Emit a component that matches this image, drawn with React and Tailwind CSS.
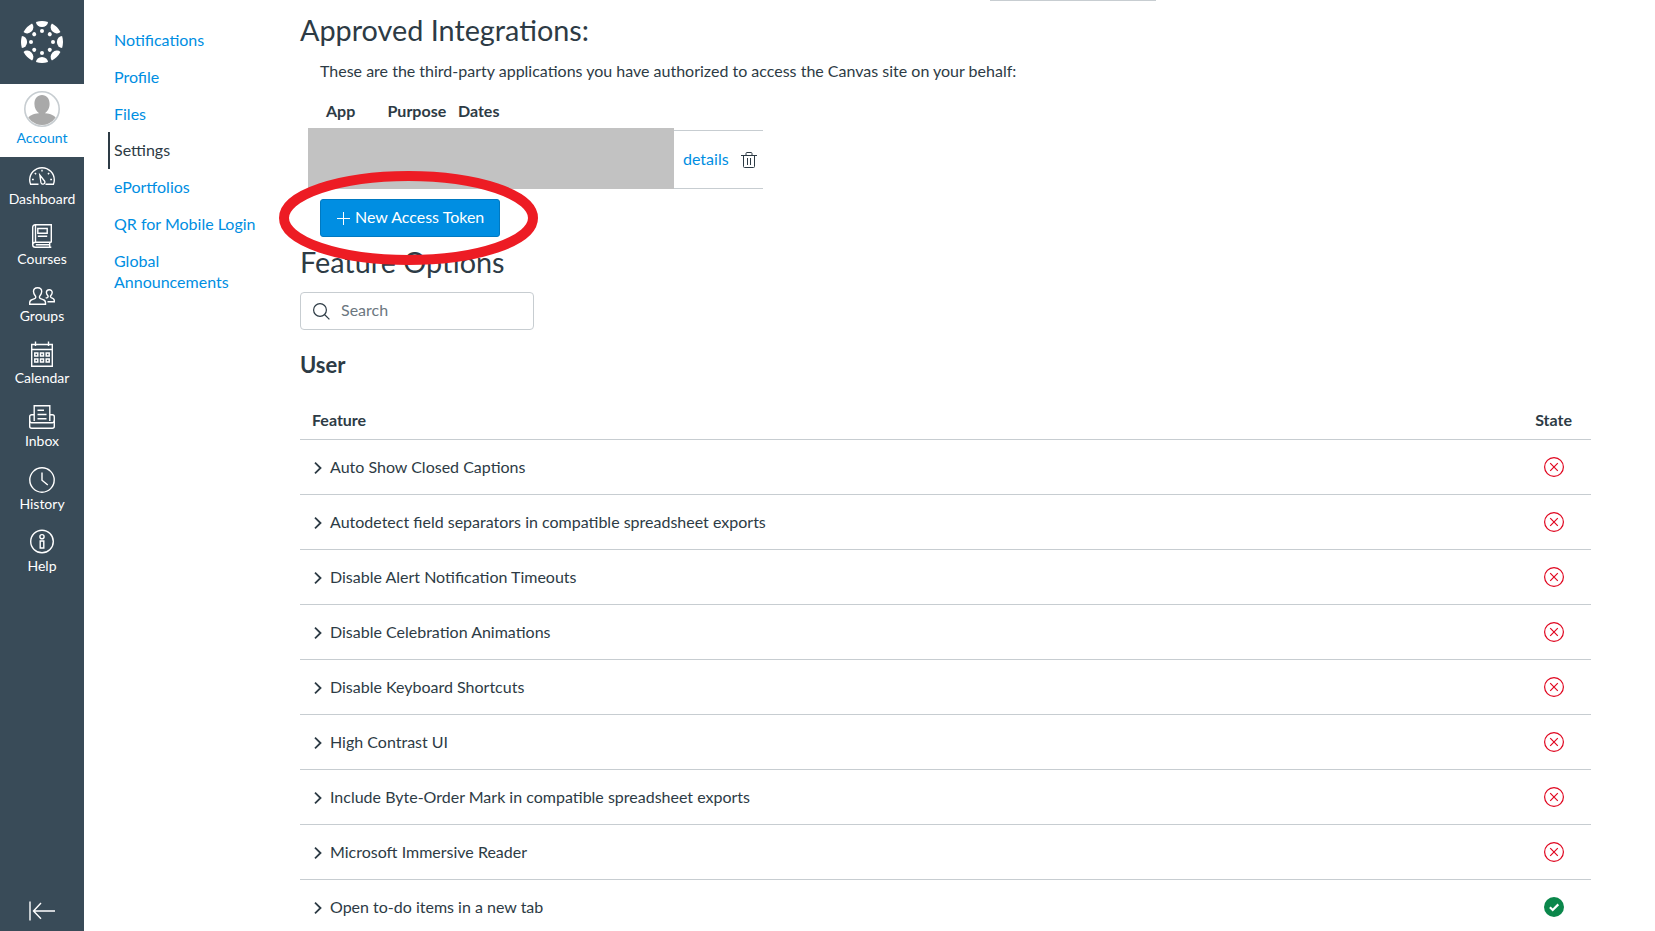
import React from "react";

const line = { fill: "none", stroke: "currentColor", strokeWidth: 1.4 };

function Logo() {
  const angles = [0, 45, 90, 135, 180, 225, 270, 315];
  return (
    <svg width="42" height="42" viewBox="-21 -21 42 42" fill="#fff">
      {angles.map((a) => (
        <g key={a} transform={`rotate(${a})`}>
          <path d="M-6 -20.1 A21 21 0 0 1 6 -20.1 A6 5.2 0 0 1 -6 -20.1Z" />
          <circle cx="0" cy="-11" r="2" />
        </g>
      ))}
    </svg>
  );
}

function Avatar() {
  return (
    <svg width="36" height="36" viewBox="0 0 36 36">
      <defs>
        <clipPath id="avatar-clip">
          <circle cx="18" cy="18" r="16" />
        </clipPath>
      </defs>
      <circle cx="18" cy="18" r="17.2" fill="#fff" stroke="#c7cdd1" strokeWidth="1.6" />
      <g clipPath="url(#avatar-clip)" fill="#a9a9a9">
        <path d="M18 4C22.600 4 25.600 7.600 25.600 13C25.600 17 23.500 20.500 21.200 22V23.500H14.800V22C12.500 20.500 10.400 17 10.400 13C10.400 7.600 13.400 4 18 4Z" />
        <path d="M3 34V28C5 24.500 10 22.500 14.500 22.200Q18 24 21.500 22.200C26 22.500 31 24.500 33 28V34Z" />
      </g>
    </svg>
  );
}

const DashboardIcon = () => (
  <svg width="26" height="18" viewBox="0 0 26 18" {...line}>
    <path d="M9.500 17.300H1.600C.9 15.800.7 14.400.7 13A12.300 12.300 0 0 1 25.300 13C25.300 14.400 25.100 15.800 24.400 17.300H16.500" />
    <path d="M10.800 8L15.500 14A2 2 0 1 1 11.900 15.500Z" strokeWidth="1.300" />
    <path d="M13 2.800V4.600M5.800 6L7.100 7.300M20.200 6L18.900 7.300M3 12.500H4.800M21.200 12.500H23" />
  </svg>
);

const CoursesIcon = () => (
  <svg width="20" height="24" viewBox="0 0 20 24" {...line}>
    <path d="M19.300 18.500V.7H3.300C1.700.7.7 1.700.7 3.200V20.800C.7 22.300 1.700 23.300 3.300 23.300H19.300M19.300 18.300H3.300C1.700 18.300.8 19.300.8 20.600M3.500 .8V18M3.800 20.800H18M17.700 18.500V23" />
    <path d="M5.800 4.500H15.200V9.300H5.800ZM5.800 12.200H15.200" />
  </svg>
);

const GroupsIcon = () => (
  <svg width="26" height="18" viewBox="0 0 26 18" {...line}>
    <path d="M16.500 17.200H.7V15.500C.7 13.300 2.200 12.800 5.700 11.600C7 11.100 7 9.800 6.200 8.700C4.900 7 4.500 5.500 4.500 4.500C4.500 2.300 6.200.7 8.600.7S12.700 2.300 12.700 4.500C12.700 5.500 12.300 7 11 8.700C10.200 9.800 10.200 11.100 11.500 11.600C15 12.800 16.500 13.300 16.500 15.500Z" />
    <path d="M18.500 14.700H25.300V13.500C25.300 11.800 24.300 11.400 22.200 10.600C21.300 10.200 21.300 9.300 21.900 8.500C22.900 7.300 23.200 6.400 23.200 5.500C23.200 3.800 22 2.700 20.300 2.700S17.400 3.800 17.400 5.500C17.400 6.400 17.700 7.300 18.700 8.500C19.300 9.300 19.300 10.200 18.400 10.600L16.700 11.200" />
  </svg>
);

const CalendarIcon = () => (
  <svg width="24" height="26" viewBox="0 0 24 26" {...line}>
    <path d="M1.700 3.500H22.300V25.300H1.700ZM1.700 8.500H22.300M5.500 .5V5M18.500 .5V5" />
    <path d="M4.800 12H7.800V15H4.800ZM10.500 12H13.500V15H10.500ZM16.200 12H19.200V15H16.200ZM4.800 18H7.800V21H4.800ZM10.500 18H13.500V21H10.500ZM16.200 18H19.200V21H16.200Z" strokeWidth="1.500" />
  </svg>
);

const InboxIcon = () => (
  <svg width="26" height="24" viewBox="0 0 26 24" {...line}>
    <path d="M5.200 16V.7H20.800V16M5 9.700H2.700C1.500 9.700.7 10.500.7 11.700V21.300C.7 22.500 1.500 23.300 2.700 23.300H23.300C24.500 23.300 25.300 22.500 25.300 21.300V11.700C25.300 10.500 24.500 9.700 23.300 9.700H21" />
    <path d="M.7 15.500C.7 17 1.500 17.700 2.700 17.700H23.300C24.500 17.700 25.300 17 25.300 15.500M8.500 5.200H15M8.500 9.500H17.500M8.500 13.700H17.500" />
  </svg>
);

const HistoryIcon = () => (
  <svg width="26" height="26" viewBox="0 0 26 26" {...line}>
    <circle cx="13" cy="13" r="12.200" />
    <path d="M13 5.500V13.200L18.800 18" />
  </svg>
);

const HelpIcon = () => (
  <svg width="24" height="25" viewBox="0 0 24 25" {...line}>
    <circle cx="12" cy="12.500" r="11.300" />
    <circle cx="12" cy="7.700" r="2.100" />
    <path d="M10.200 12H13.800V19H10.200Z" />
  </svg>
);

const navItems = [
  { label: "Dashboard", Icon: DashboardIcon, box: "mt-[10px] h-[22px]" },
  { label: "Courses", Icon: CoursesIcon, box: "mt-[15px] h-[25px]" },
  { label: "Groups", Icon: GroupsIcon, box: "mt-[18px] h-[19px]" },
  { label: "Calendar", Icon: CalendarIcon, box: "mt-[15px] h-[27px]" },
  { label: "Inbox", Icon: InboxIcon, box: "mt-[17px] h-[26px]" },
  { label: "History", Icon: HistoryIcon, box: "mt-4 h-[27px]" },
  { label: "Help", Icon: HelpIcon, box: "mt-[15px] h-[27px]" },
];

const links = ["Notifications", "Profile", "Files", "Settings", "ePortfolios", "QR for Mobile Login", "Global Announcements"];

const features = [
  "Auto Show Closed Captions",
  "Autodetect field separators in compatible spreadsheet exports",
  "Disable Alert Notification Timeouts",
  "Disable Celebration Animations",
  "Disable Keyboard Shortcuts",
  "High Contrast UI",
  "Include Byte-Order Mark in compatible spreadsheet exports",
  "Microsoft Immersive Reader",
  "Open to-do items in a new tab",
];

function StateIcon({ on }) {
  return on ? (
    <svg width="20" height="20" viewBox="0 0 20 20">
      <circle cx="10" cy="10" r="10" fill="#0b874b" />
      <path d="M5.900 10.200L8.700 13L14.300 7.400" fill="none" stroke="#fff" strokeWidth="2.200" />
    </svg>
  ) : (
    <svg width="20" height="20" viewBox="0 0 20 20" fill="none" stroke="#e0061f" strokeWidth="1.200">
      <circle cx="10" cy="10" r="9.400" />
      <path d="M6.200 6.200L13.800 13.800M13.800 6.200L6.200 13.800" />
    </svg>
  );
}

export default function App() {
  return (
    <div className="flex h-[931px] w-[1655px] overflow-hidden bg-white font-['Lato',sans-serif] text-base text-[#2d3b45]">
      <nav className="flex w-[84px] shrink-0 flex-col bg-[#394b58] text-sm leading-5 text-white">
        <div className="flex h-[84px] items-center justify-center">
          <Logo />
        </div>
        <a className="flex h-[73px] flex-col items-center bg-white pt-[7px] text-[#008ee2]">
          <Avatar />
          <span className="mt-px">Account</span>
        </a>
        {navItems.map(({ label, Icon, box }) => (
          <a key={label} className="flex flex-col items-center">
            <span className={box}>
              <Icon />
            </span>
            <span>{label}</span>
          </a>
        ))}
        <div className="mt-auto flex justify-center pb-[10px]">
          <svg width="26" height="20" viewBox="0 0 26 20" {...line}>
            <path d="M1 0.500V19.500M26 10H5M12 2L4.500 10L12 17.800" />
          </svg>
        </div>
      </nav>

      <aside className="flex w-[216px] shrink-0 flex-col pl-6 pt-[22px] leading-[20.8px] text-[#008ee2]">
        {links.map((l) => (
          <a
            key={l}
            className={
              l === "Settings"
                ? "border-l-2 border-[#2d3b45] py-2 pl-1 pr-8 text-[#2d3b45]"
                : "border-l-2 border-transparent py-2 pl-1 pr-8"
            }
          >
            {l}
          </a>
        ))}
      </aside>

      <main className="relative h-full w-[1291px] shrink-0">
        <div className="absolute left-[690px] top-0 h-px w-[166px] bg-[#c7cdd1]" />
        <h2 className="mt-3 text-[28.8px] leading-9">Approved Integrations:</h2>
        <p className="ml-5 mt-[11px] leading-6">
          These are the third-party applications you have authorized to access the Canvas site on your behalf:
        </p>
        <div className="ml-[26px] mt-4 flex font-bold leading-6">
          <span className="w-[61.5px]">App</span>
          <span className="w-[70.5px]">Purpose</span>
          <span>Dates</span>
        </div>
        <div className="ml-2 mt-[5px] flex h-[61px] w-[455px]">
          <div className="w-[366px] bg-[#c2c2c2]" />
          <div className="mt-[2px] flex h-[59px] flex-1 items-center border-y border-[#c7cdd1] pl-[9px]">
            <a className="pb-[2px] leading-6 text-[#008ee2]">details</a>
            <svg className="ml-auto mr-[6px]" width="16" height="16" viewBox="0 0 16 16" fill="none" stroke="#2d3b45" strokeWidth="1">
              <path d="M0 3.500H16M5 3.500V1.500Q5 .5 6 .5H10Q11 .5 11 1.500V3.500M2.500 3.500V14.500Q2.500 15.500 3.500 15.500H12.500Q13.500 15.500 13.500 14.500V3.500M6.500 6V13M9.500 6V13" />
            </svg>
          </div>
        </div>
        <button className="ml-5 mt-[10px] flex h-[38px] w-[180px] items-center rounded-[3px] border border-[#0079c1] bg-[#008ee2] pl-4 text-white">
          <svg width="13" height="14" viewBox="0 0 13 14" stroke="#fff" strokeWidth="1">
            <path d="M0 7.500H13M6.500 1V14" />
          </svg>
          <span className="ml-[5px] whitespace-nowrap pb-[2px] leading-6">New Access Token</span>
        </button>
        <h2 className="mt-[7px] text-[28.8px] leading-9">Feature Options</h2>
        <div className="mt-3 flex h-[38px] w-[234px] items-center rounded-[4px] border border-[#c7cdd1] pl-3">
          <svg width="17" height="17" viewBox="0 0 17 17" fill="none" stroke="#2d3b45" strokeWidth="1.200">
            <circle cx="7" cy="7" r="6.400" />
            <path d="M11.500 11.500L16.400 16.400" />
          </svg>
          <span className="ml-[11px] pb-[2px] leading-6 text-[#6b7780]">Search</span>
        </div>
        <h3 className="mt-[21px] text-[22px] font-bold leading-7">User</h3>
        <div className="mt-[29px] flex h-8 w-full justify-between border-b border-[#c7cdd1] pl-3 pr-[19px] font-bold leading-6">
          <span>Feature</span>
          <span>State</span>
        </div>
        {features.map((f, i) => (
          <div key={f} className="flex h-[55px] w-full items-center border-b border-[#c7cdd1] pl-[14px] pr-[27px]">
            <svg className="mt-[2px]" width="8" height="12" viewBox="0 0 8 12" fill="none" stroke="#2d3b45" strokeWidth="1.800">
              <path d="M1 .7L6.500 6L1 11.300" />
            </svg>
            <span className="ml-2 leading-6">{f}</span>
            <span className="ml-auto">
              <StateIcon on={i === 8} />
            </span>
          </div>
        ))}
        <svg className="absolute left-[-21px] top-[171px]" width="259" height="94" viewBox="0 0 259 94" fill="none">
          <ellipse cx="129.500" cy="47" rx="124.500" ry="42" stroke="#ed1c24" strokeWidth="10" />
        </svg>
      </main>
    </div>
  );
}
